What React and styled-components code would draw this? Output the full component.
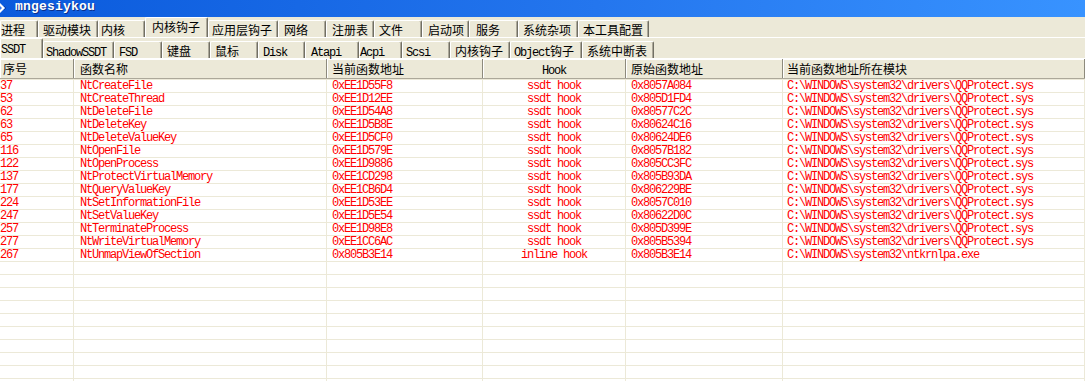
import React from "react";
import styled, { createGlobalStyle } from "styled-components";

const GlobalStyle = createGlobalStyle`
  html, body {
    margin: 0;
    padding: 0;
    background: #ffffff;
    overflow: hidden;
  }
`;

const CJK = `"Noto Sans CJK SC", "Liberation Sans", sans-serif`;
const MONO = `"Liberation Mono", "Noto Sans CJK SC", monospace`;

const Window = styled.div`
  width: 1085px;
  height: 381px;
  overflow: hidden;
  background: #ffffff;
  font-family: ${CJK};
  font-size: 12px;
  color: #000;
`;

const TitleBar = styled.div`
  height: 17px;
  display: flex;
  align-items: flex-start;
  gap: 9px;
  background: linear-gradient(to right, #0a5adc 0%, #2476ee 55%, #3893ff 100%);
`;

const Title = styled.span`
  font-family: ${MONO};
  font-weight: bold;
  font-size: 13px;
  line-height: 13px;
  letter-spacing: 0.2px;
  color: #ffffff;
  text-shadow: 1px 1px 0 #0b2f8a;
`;

const TabStrip = styled.div`
  height: 20px;
  display: flex;
  align-items: flex-end;
  background: #ece9d8;
  border-bottom: 1px solid #ffffff;
`;

const Tab = styled.div`
  box-sizing: border-box;
  flex: none;
  width: ${(p) => p.$w}px;
  height: ${(p) => (p.$active ? 20 : 17)}px;
  padding-left: ${(p) => p.$pl}px;
  padding-top: 2px;
  border-top: 1px solid #ffffff;
  border-left: 1px solid #ffffff;
  border-right: 1px solid #716f64;
  box-shadow: inset -1px 0 0 #aca899;
  border-radius: 2px 2px 0 0;
  line-height: 13px;
  white-space: nowrap;
`;

const Latin = styled.span`
  font-family: ${MONO};
  font-size: 12px;
  line-height: 12px;
  letter-spacing: -1.2px;
`;

const Grid = styled.div`
  display: grid;
  grid-template-columns: 74px 253px 156px 143px 157px 1fr;
`;

const Header = styled(Grid)`
  height: 19px;
  background: #ece9d8;
  border-bottom: 1px solid #aca899;
`;

const HeadCell = styled.div`
  box-sizing: border-box;
  padding-left: ${(p) => p.$pl}px;
  text-align: ${(p) => (p.$center ? "center" : "left")};
  border-right: 1px solid #8d8a7c;
  box-shadow: inset 1px 1px 0 #ffffff;
  line-height: 19px;
  white-space: nowrap;
`;

const Body = styled.div`
  border-top: 1px solid #ece9d8;
`;

const Row = styled(Grid)`
  height: 12px;
  border-bottom: 1px solid #ece9d8;
`;

const Cell = styled.div`
  box-sizing: border-box;
  padding-left: ${(p) => p.$pl}px;
  text-align: ${(p) => (p.$center ? "center" : "left")};
  border-right: 1px solid #ece9d8;
  font-family: ${MONO};
  font-size: 12px;
  letter-spacing: -1.2px;
  line-height: 12px;
  color: #ff0000;
  white-space: nowrap;
`;

const tabs1 = [
  { label: "进程", w: 38, pl: 0 },
  { label: "驱动模块", w: 60, pl: 4 },
  { label: "内核", w: 47, pl: 2 },
  { label: "内核钩子", w: 63, pl: 6, active: true },
  { label: "应用层钩子", w: 70, pl: 3 },
  { label: "网络", w: 48, pl: 5 },
  { label: "注册表", w: 48, pl: 5 },
  { label: "文件", w: 48, pl: 4 },
  { label: "启动项", w: 47, pl: 5 },
  { label: "服务", w: 49, pl: 6 },
  { label: "系统杂项", w: 60, pl: 4 },
  { label: "本工具配置", w: 71, pl: 4 },
];

const tabs2 = [
  { latin: "SSDT", w: 43, pl: 0, active: true },
  { latin: "ShadowSSDT", w: 71, pl: 2 },
  { latin: "FSD", w: 48, pl: 4 },
  { label: "键盘", w: 48, pl: 4 },
  { label: "鼠标", w: 48, pl: 4 },
  { latin: "Disk", w: 47, pl: 4 },
  { latin: "Atapi", w: 54, pl: 5 },
  { latin: "Acpi", w: 43, pl: 0 },
  { latin: "Scsi", w: 48, pl: 3 },
  { label: "内核钩子", w: 60, pl: 4 },
  { latin: "Object", label: "钩子", w: 72, pl: 3 },
  { label: "系统中断表", w: 72, pl: 4 },
];

const QQ = "C:\\WINDOWS\\system32\\drivers\\QQProtect.sys";

const rows = [
  ["37", "NtCreateFile", "0xEE1D55F8", "ssdt hook", "0x8057A084", QQ],
  ["53", "NtCreateThread", "0xEE1D12EE", "ssdt hook", "0x805D1FD4", QQ],
  ["62", "NtDeleteFile", "0xEE1D54A8", "ssdt hook", "0x80577C2C", QQ],
  ["63", "NtDeleteKey", "0xEE1D5B8E", "ssdt hook", "0x80624C16", QQ],
  ["65", "NtDeleteValueKey", "0xEE1D5CF0", "ssdt hook", "0x80624DE6", QQ],
  ["116", "NtOpenFile", "0xEE1D579E", "ssdt hook", "0x8057B182", QQ],
  ["122", "NtOpenProcess", "0xEE1D9886", "ssdt hook", "0x805CC3FC", QQ],
  ["137", "NtProtectVirtualMemory", "0xEE1CD298", "ssdt hook", "0x805B93DA", QQ],
  ["177", "NtQueryValueKey", "0xEE1CB6D4", "ssdt hook", "0x806229BE", QQ],
  ["224", "NtSetInformationFile", "0xEE1D53EE", "ssdt hook", "0x8057C010", QQ],
  ["247", "NtSetValueKey", "0xEE1D5E54", "ssdt hook", "0x80622D0C", QQ],
  ["257", "NtTerminateProcess", "0xEE1D98E8", "ssdt hook", "0x805D399E", QQ],
  ["277", "NtWriteVirtualMemory", "0xEE1CC6AC", "ssdt hook", "0x805B5394", QQ],
  ["267", "NtUnmapViewOfSection", "0x805B3E14", "inline hook", "0x805B3E14", "C:\\WINDOWS\\system32\\ntkrnlpa.exe"],
];

const pads = [0, 6, 5, 0, 5, 4];

function AppIcon() {
  return (
    <svg width="6" height="16" viewBox="10 0 6 16">
      <path d="M8 1 L15 8 L8 15 L1 8 Z" fill="#ffffff" />
      <path d="M8 4 L12 8 L8 12 L4 8 Z" fill="#3a7be8" />
      <path d="M14 6 L16 8 L14 10" stroke="#0d3fa8" strokeWidth="1" fill="none" />
    </svg>
  );
}

function TabLabel({ t }) {
  return (
    <>
      {t.latin && <Latin>{t.latin}</Latin>}
      {t.label}
    </>
  );
}

export default function App() {
  const blanks = Array.from({ length: 12 });
  return (
    <Window>
      <GlobalStyle />
      <TitleBar>
        <AppIcon />
        <Title>mngesiykou</Title>
      </TitleBar>
      <TabStrip>
        {tabs1.map((t) => (
          <Tab key={t.label} $w={t.w} $pl={t.pl} $active={t.active}>
            <TabLabel t={t} />
          </Tab>
        ))}
      </TabStrip>
      <TabStrip>
        {tabs2.map((t, i) => (
          <Tab key={i} $w={t.w} $pl={t.pl} $active={t.active}>
            <TabLabel t={t} />
          </Tab>
        ))}
      </TabStrip>
      <Header>
        <HeadCell $pl={3}>序号</HeadCell>
        <HeadCell $pl={6}>函数名称</HeadCell>
        <HeadCell $pl={5}>当前函数地址</HeadCell>
        <HeadCell $center>
          <Latin>Hook</Latin>
        </HeadCell>
        <HeadCell $pl={5}>原始函数地址</HeadCell>
        <HeadCell $pl={4}>当前函数地址所在模块</HeadCell>
      </Header>
      <Body>
        {rows.map((r, i) => (
          <Row key={i}>
            {r.map((v, j) => (
              <Cell key={j} $pl={pads[j]} $center={j === 3}>
                {v}
              </Cell>
            ))}
          </Row>
        ))}
        {blanks.map((_, i) => (
          <Row key={"b" + i}>
            {pads.map((p, j) => (
              <Cell key={j} $pl={p} />
            ))}
          </Row>
        ))}
      </Body>
    </Window>
  );
}
